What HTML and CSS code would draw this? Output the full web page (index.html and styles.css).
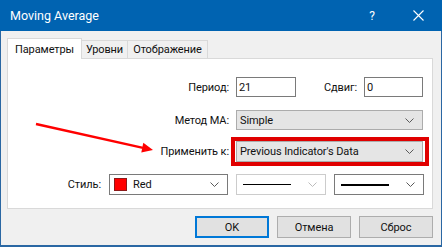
FILE: index.html
```html
<!DOCTYPE html>
<html lang="ru">

<head>
    <meta charset="UTF-8">
    <title>Moving Average</title>
    <link rel="stylesheet" href="styles.css">
</head>

<body>
    <div class="window">
        <div class="titlebar">
            <span class="title">Moving Average</span>
            <span class="help">?</span>
            <svg class="close" width="11" height="11" viewBox="0 0 11 11">
                <path d="M0.5 0.5 L10.5 10.5 M10.5 0.5 L0.5 10.5" stroke="#fff" stroke-width="1.1" fill="none" />
            </svg>
        </div>
        <div class="client">
            <div class="tabs">
                <div class="tab active">Параметры</div>
                <div class="tab t2">Уровни</div>
                <div class="tab t3">Отображение</div>
            </div>
            <div class="panel">
                <div class="row r1">
                    <label class="lbl">Период:</label>
                    <div class="edit period">21</div>
                    <label class="lbl shiftLbl">Сдвиг:</label>
                    <div class="edit shift">0</div>
                </div>
                <div class="row r2">
                    <label class="lbl">Метод MA:</label>
                    <div class="combo wide">
                        <span class="value">Simple</span>
                        <svg class="chev" width="9" height="5" viewBox="0 0 9 5"><path d="M0.5 0.5 L4.5 4.5 L8.5 0.5" /></svg>
                    </div>
                </div>
                <div class="row r3">
                    <label class="lbl">Применить к:</label>
                    <div class="highlight">
                        <div class="combo wide">
                            <span class="value">Previous Indicator's Data</span>
                            <svg class="chev" width="9" height="5" viewBox="0 0 9 5"><path d="M0.5 0.5 L4.5 4.5 L8.5 0.5" /></svg>
                        </div>
                    </div>
                </div>
                <div class="row r4">
                    <label class="lbl styleLbl">Стиль:</label>
                    <div class="combo white colorPick">
                        <span class="swatch"></span>
                        <span class="value">Red</span>
                        <svg class="chev" width="9" height="5" viewBox="0 0 9 5"><path d="M0.5 0.5 L4.5 4.5 L8.5 0.5" /></svg>
                    </div>
                    <div class="combo white linePick disabled">
                        <span class="stroke thin"></span>
                        <svg class="chev" width="9" height="5" viewBox="0 0 9 5"><path d="M0.5 0.5 L4.5 4.5 L8.5 0.5" /></svg>
                    </div>
                    <div class="combo white linePick">
                        <span class="stroke thick"></span>
                        <svg class="chev" width="9" height="5" viewBox="0 0 9 5"><path d="M0.5 0.5 L4.5 4.5 L8.5 0.5" /></svg>
                    </div>
                </div>
            </div>
            <div class="buttons">
                <button class="btn default">OK</button>
                <button class="btn">Отмена</button>
                <button class="btn">Сброс</button>
            </div>
        </div>
        <!-- annotation arrow pointing at the highlighted field -->
        <svg class="arrow" width="442" height="247" viewBox="0 0 442 247">
            <line x1="36" y1="124" x2="143" y2="147.8" stroke="#f00" stroke-width="2.4" />
            <polygon points="153,150 141.3,152.4 143.3,142.8" fill="#f00" />
        </svg>
    </div>
</body>

</html>
```

FILE: styles.css
```css
:root {
    --title: #0063b1;
    --frame: #2a67a3;
    --face: #f0f0f0;
    --tabLine: #d9d9d9;
    --editLine: #7a7a7a;
    --comboFace: #e5e5e5;
    --comboLine: #acacac;
    --accent: #0078d7;
    --font: Roboto, "Liberation Sans", sans-serif;
}

* {
    box-sizing: border-box;
}

body {
    margin: 0;
    font-family: var(--font);
    font-size: 11px;
    letter-spacing: -0.1px;
    color: #111;
}

.window {
    position: relative;
    width: 442px;
    height: 247px;
    background-color: var(--face);
    border: 1px solid var(--frame);
    border-top: none;
    border-bottom-width: 2px;
    display: flex;
    flex-direction: column;
}

.titlebar {
    height: 31px;
    margin: 0 -1px;
    background-color: var(--title);
    color: #fff;
    display: flex;
    align-items: center;
    padding-left: 10px;
    font-size: 12.5px;
    letter-spacing: 0;
}

.title {
    flex: 1;
}

.help {
    margin-right: 38px;
    font-size: 12px;
}

.close {
    margin-right: 18px;
}

.client {
    padding: 7px 8px 0 6px;
}

.tabs {
    display: flex;
    align-items: flex-end;
    height: 20px;
}

.tab {
    height: 18px;
    border: 1px solid var(--tabLine);
    border-bottom: none;
    background-color: var(--face);
    display: flex;
    align-items: center;
    justify-content: center;
    margin-left: -1px;
}

.tab.active {
    height: 21px;
    width: 75px;
    margin-left: 0;
    margin-bottom: -1px;
    background-color: #fff;
    position: relative;
    z-index: 1;
}

.tab.t2 {
    width: 47px;
}

.tab.t3 {
    width: 81px;
}

.panel {
    height: 151px;
    background-color: #fff;
    border: 1px solid var(--tabLine);
    padding-top: 18px;
}

.row {
    display: flex;
    align-items: center;
}

.r2 {
    margin-top: 13px;
}

.r3 {
    margin-top: 7px;
}

.r4 {
    margin-top: 8px;
    gap: 8px;
}

.lbl {
    width: 221px;
    text-align: right;
}

.shiftLbl {
    width: 61px;
}

.styleLbl {
    width: 93px;
}

.edit {
    height: 20px;
    border: 1px solid var(--editLine);
    background-color: #fff;
    padding-left: 2px;
    display: flex;
    align-items: center;
    margin-left: 7px;
}

.period {
    width: 60px;
}

.shift {
    width: 59px;
}

.combo {
    height: 20px;
    border: 1px solid var(--comboLine);
    background-color: var(--comboFace);
    display: flex;
    align-items: center;
    padding: 0 8px 0 3px;
}

.combo .value {
    flex: 1;
}

.chev path {
    fill: none;
    stroke: #5a5a5a;
    stroke-width: 1;
}

.wide {
    width: 187px;
}

.r2 .combo {
    margin-left: 7px;
}

.highlight {
    margin-left: 2px;
    border: 4px solid #e00000;
    padding: 0 2px 0 1px;
}

.r3 .combo {
    height: 21px;
}

.combo.white {
    height: 21px;
    background-color: #fff;
    border-color: var(--editLine);
}

.colorPick {
    width: 119px;
    padding-left: 4px;
}

.swatch {
    width: 13px;
    height: 13px;
    background-color: #f00;
    border: 1px solid #8c1a1a;
    margin-right: 6px;
}

.linePick {
    width: 90px;
    padding-left: 6px;
}

.linePick.disabled {
    border-color: #cccccc;
}

.linePick.disabled .chev path {
    stroke: #bcbcbc;
}

.stroke {
    flex: 1;
    margin-right: 17px;
    background-color: #000;
}

.stroke.thin {
    height: 1px;
}

.stroke.thick {
    height: 2px;
}

.buttons {
    display: flex;
    justify-content: flex-end;
    gap: 8px;
    margin-top: 7px;
    padding-right: 0;
}

.btn {
    width: 74px;
    height: 22px;
    font-family: var(--font);
    font-size: 11px;
    letter-spacing: -0.1px;
    color: #111;
    background-color: #e1e1e1;
    border: 1px solid #adadad;
    border-radius: 0;
    padding: 0;
}

.btn.default {
    border: 2px solid var(--accent);
}

.arrow {
    position: absolute;
    left: -1px;
    top: 0;
    pointer-events: none;
}
```
